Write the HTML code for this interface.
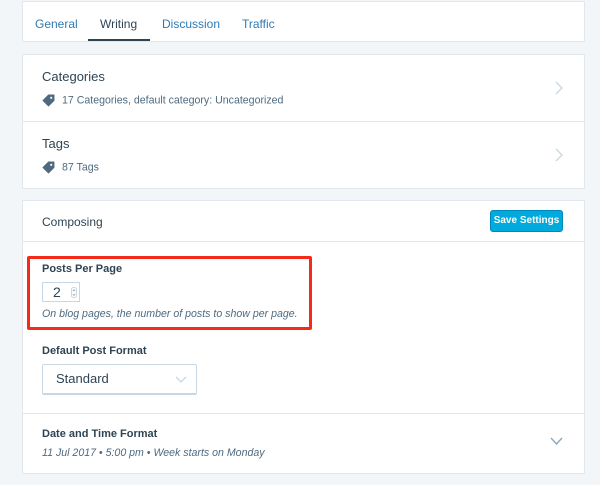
<!DOCTYPE html><html><head><style>
body{margin:0;width:600px;height:485px;background:#f3f6f8;font-family:"Liberation Sans",sans-serif;position:relative;overflow:hidden}
.c{position:absolute;left:23px;width:561px;background:#fff;box-shadow:0 0 0 1px #e1e7ec}
.a{position:absolute}
.t{font-size:12px;color:#2e7bb4;top:15px}
.h{font-size:13px;color:#2e4453}
.s{font-size:10.6px;color:#4f6a80}
.tag{display:inline-block;vertical-align:middle;margin-right:7px}
.b{font-size:11px;font-weight:bold;color:#2e4453}
.i{font-size:10.6px;font-style:italic;color:#4f6a80}
</style></head><body>
<div class="c" style="top:2px;height:39px">
<span class="a t" style="left:12px">General</span>
<span class="a t" style="left:77px;color:#2e4453">Writing</span>
<div class="a" style="left:65px;top:37px;width:62px;height:2px;background:#2e4453"></div>
<span class="a t" style="left:139px">Discussion</span>
<span class="a t" style="left:219px">Traffic</span>
</div>
<div class="c" style="top:55px;height:133px">
<span class="a h" style="left:19px;top:14px">Categories</span>
<div class="a s" style="left:19px;top:39px"><svg class="tag" width="13" height="13" viewBox="0 0 12 12"><path d="M1 6L6 1H11V6L6 11Z" fill="#4f6a80" stroke="#4f6a80" stroke-linejoin="round"/><circle cx="8.5" cy="3.5" r="1" fill="#fff"/></svg>17 Categories, default category: Uncategorized</div>
<svg class="a" style="left:532px;top:26px" width="8" height="14"><path d="M1 1L7 7L1 13" fill="none" stroke="#c8d7e1" stroke-width="1.3"/></svg>
<div class="a" style="left:0;top:66px;width:561px;height:1px;background:#e1e7ec"></div>
<span class="a h" style="left:19px;top:81px">Tags</span>
<div class="a s" style="left:19px;top:106px"><svg class="tag" width="13" height="13" viewBox="0 0 12 12"><path d="M1 6L6 1H11V6L6 11Z" fill="#4f6a80" stroke="#4f6a80" stroke-linejoin="round"/><circle cx="8.5" cy="3.5" r="1" fill="#fff"/></svg>87 Tags</div>
<svg class="a" style="left:532px;top:93px" width="8" height="14"><path d="M1 1L7 7L1 13" fill="none" stroke="#c8d7e1" stroke-width="1.3"/></svg>
</div>
<div class="c" style="top:201px;height:272px">
<span class="a" style="left:19px;top:14px;font-size:12px;color:#2e4453">Composing</span>
<div class="a" style="left:467px;top:9px;width:73px;height:22px;background:#00aadc;border:1px solid #0087be;border-radius:3px;box-sizing:border-box;color:#fff;font-size:10px;font-weight:bold;text-align:center;line-height:20px">Save Settings</div>
<div class="a" style="left:0;top:40px;width:561px;height:1px;background:#e1e7ec"></div>
<div class="a" style="left:4px;top:55px;width:279px;height:68px;border:3px solid #f42a1a;border-radius:2px"></div>
<span class="a b" style="left:19px;top:62px">Posts Per Page</span>
<div class="a" style="left:19px;top:81px;width:38px;height:20px;border:1px solid #c8d7e1;box-sizing:border-box;font-size:14px;color:#2e4453;padding-left:10px;line-height:18px">2
<svg class="a" style="left:28px;top:4px" width="6" height="11"><rect x="0.5" y="0.5" width="5" height="10" rx="2" fill="none" stroke="#c8d7e1"/><path d="M1.8 4L3 2.6L4.2 4M1.8 7L3 8.4L4.2 7" fill="none" stroke="#87a6bc" stroke-width="0.8"/></svg></div>
<span class="a i" style="left:19px;top:107px">On blog pages, the number of posts to show per page.</span>
<span class="a b" style="left:19px;top:144px">Default Post Format</span>
<div class="a" style="left:19px;top:163px;width:155px;height:31px;border:1px solid #c8d7e1;border-bottom-width:2px;box-sizing:border-box;border-radius:2px;font-size:13px;color:#2e4453;padding-left:13px;line-height:28px">Standard
<svg class="a" style="left:132px;top:11px" width="12" height="8"><path d="M1 1L6 6L11 1" fill="none" stroke="#c8d7e1" stroke-width="1.3"/></svg></div>
<div class="a" style="left:0;top:212px;width:561px;height:1px;background:#e1e7ec"></div>
<span class="a b" style="left:19px;top:227px">Date and Time Format</span>
<span class="a i" style="left:19px;top:246px">11 Jul 2017 • 5:00 pm • Week starts on Monday</span>
<svg class="a" style="left:527px;top:236px" width="13" height="9"><path d="M1 1L6.5 7L12 1" fill="none" stroke="#87a6bc" stroke-width="1.3"/></svg>
</div>
</body></html>
